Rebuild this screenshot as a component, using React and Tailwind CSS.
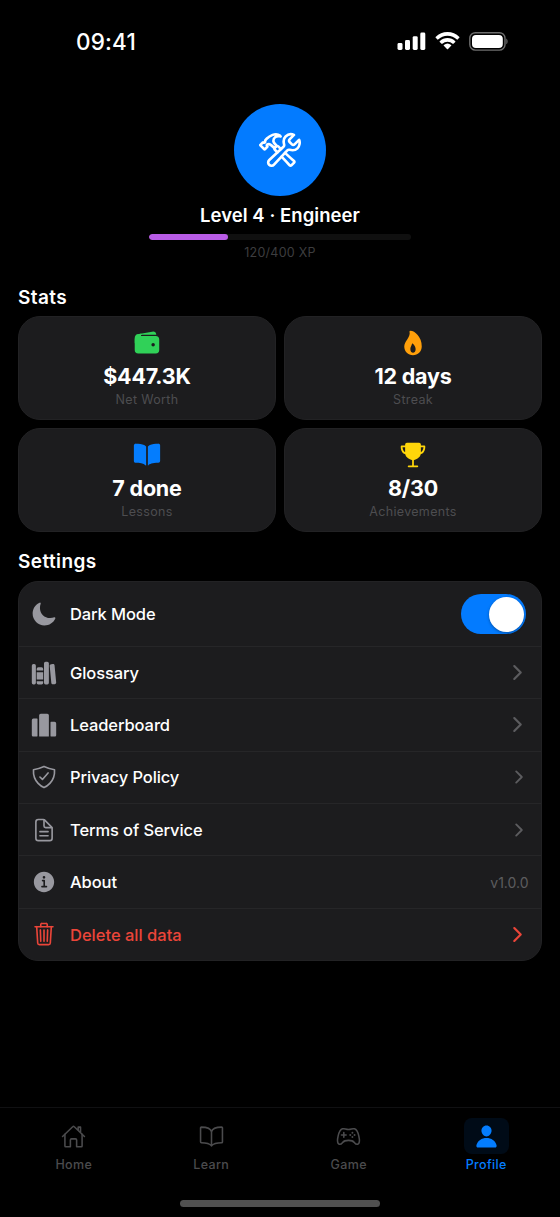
import {
  IoWallet, IoFlame, IoBook, IoTrophy, IoMoon, IoLibrary, IoPodium,
  IoShieldCheckmarkOutline, IoDocumentTextOutline, IoInformationCircle,
  IoTrashOutline, IoChevronForward, IoHomeOutline, IoBookOutline,
  IoGameControllerOutline, IoPerson, IoConstructOutline,
} from "react-icons/io5";

function StatusBar() {
  return (
    <header className="flex h-[82px] items-center justify-between pl-[76px] pr-[52px]">
      <span className="pt-px text-[22.500px] leading-7 font-medium tracking-[0.2px]">09:41</span>
      <div className="flex items-center gap-[9px]">
        <svg width="29" height="18" viewBox="0 0 29 18" fill="currentColor">
          <rect x="0.5" y="11" width="5" height="7" rx="1.4" />
          <rect x="8" y="8" width="5" height="10" rx="1.4" />
          <rect x="15.7" y="4.2" width="5" height="13.8" rx="1.4" />
          <rect x="23.3" y="0.5" width="5" height="17.5" rx="1.4" />
        </svg>
        <svg width="25" height="18" viewBox="0 0 17 12" fill="currentColor">
          <path d="M8.5 2.4c2.4 0 4.7.9 6.4 2.6.1.1.3.1.5 0l1.2-1.3a.4.4 0 0 0 0-.5 11.7 11.7 0 0 0-16.2 0 .4.4 0 0 0 0 .5L1.600 5c.1.1.4.1.5 0a9.200 9.200 0 0 1 6.400-2.600zM8.500 6.500c1.300 0 2.600.5 3.500 1.400.2.100.400.100.500 0l1.300-1.300a.4.4 0 0 0 0-.5 7.600 7.600 0 0 0-10.600 0 .4.4 0 0 0 0 .5l1.300 1.300c.1.100.300.100.500 0a5.200 5.200 0 0 1 3.500-1.400zM11 9.300a.400.400 0 0 0 0-.5 3.800 3.800 0 0 0-5 0 .4.4 0 0 0 0 .5l2.300 2.300c.100.100.300.100.400 0z" />
        </svg>
        <svg width="39" height="19" viewBox="0 0 39 19" fill="none">
          <rect x="0.8" y="0.7" width="35.200" height="17.400" rx="5.600" stroke="#6d6d6d" strokeWidth="1.400" />
          <rect x="3" y="2.900" width="30.800" height="13" rx="3.900" fill="#fff" />
          <path d="M37.300 6.500c1.700.9 1.700 4.900 0 5.800z" fill="#6d6d6d" />
        </svg>
      </div>
    </header>
  );
}

function StatCard({ icon: Icon, color, value, label }) {
  return (
    <div className="flex h-[104px] flex-col items-center rounded-[22px] border border-[#222224] bg-[#1c1c1e] pt-[12px]">
      <Icon className={`size-[28px] ${color}`} />
      <div className="mt-[5px] text-[21.500px] leading-[28px] font-bold tracking-[-0.2px]">{value}</div>
      <div className="mt-[2px] text-[12.500px] leading-[16px] tracking-[0.330px] text-[#4d4d50]">{label}</div>
    </div>
  );
}

function Row({ icon: Icon, label, danger, small, children }) {
  return (
    <div className={`flex flex-1 items-center border-b border-[#262628] pl-[12px] pr-[12.500px] last:border-b-0 ${danger ? "text-[#eb4539]" : "text-white"}`}>
      <Icon className={`size-[26px] ${danger ? "" : "text-[#98989f]"}`} />
      <span className={`ml-[13px] flex-1 text-[16.500px] leading-[22px] font-medium ${danger ? "pt-px" : "tracking-[-0.1px]"}`}>{label}</span>
      {children || (
        <IoChevronForward className={`${small ? "size-[20px]" : "size-[23px]"} ${danger ? "" : "text-[#5c5c5f]"}`} />
      )}
    </div>
  );
}

function Tab({ icon: Icon, label, active }) {
  return (
    <div className={`flex flex-1 flex-col items-center ${active ? "text-[#047dfe]" : "text-[#4b4b4d]"}`}>
      <div className={`flex h-[36px] w-[45px] items-center justify-center rounded-[8px] ${active ? "bg-[#000b17]" : ""}`}>
        <Icon className="size-[25px]" />
      </div>
      <span className="mt-[3px] text-[12.500px] leading-[16px] font-medium tracking-[0.350px]">{label}</span>
    </div>
  );
}

export default function App() {
  return (
    <div className="flex h-[1217px] w-[560px] flex-col overflow-hidden bg-black font-['Inter',sans-serif] text-white">
      <StatusBar />
      <main className="flex flex-1 flex-col px-[18px] pt-[22px]">
        <section className="flex flex-col items-center">
          <div className="flex size-[92px] items-center justify-center rounded-full bg-[#037bff]">
            <IoConstructOutline className="size-[42px]" />
          </div>
          <h1 className="mt-[7px] text-[18.500px] leading-[24px] font-semibold tracking-[0.050px]">Level 4 · Engineer</h1>
          <div className="mt-[7px] h-[6px] w-[262px] overflow-hidden rounded-full bg-[#101010]">
            <div className="h-full w-[30%] rounded-full bg-[#b95ce6]" />
          </div>
          <div className="mt-[5px] text-[12.500px] leading-[16px] tracking-[0.250px] text-[#3d3d3f]">120/400 XP</div>
        </section>

        <h2 className="mt-[25px] text-[19px] leading-[24px] font-semibold tracking-[0.400px]">Stats</h2>
        <section className="mt-[6px] grid grid-cols-2 gap-[8px]">
          <StatCard icon={IoWallet} color="text-[#30d158]" value="$447.3K" label="Net Worth" />
          <StatCard icon={IoFlame} color="text-[#ff9f0a]" value="12 days" label="Streak" />
          <StatCard icon={IoBook} color="text-[#047dfe]" value="7 done" label="Lessons" />
          <StatCard icon={IoTrophy} color="text-[#ffd60a]" value="8/30" label="Achievements" />
        </section>

        <h2 className="mt-[18px] text-[19px] leading-[24px] font-semibold tracking-[0.400px]">Settings</h2>
        <section className="mt-[7px] flex h-[380px] flex-col rounded-[20px] border border-[#222224] bg-[#1c1c1e]">
          <div className="flex h-[65px]">
            <div className="flex flex-1 items-center border-b border-[#262628] pr-[15px] pl-[12px]">
              <IoMoon className="size-[26px] text-[#98989f]" />
              <span className="ml-[13px] flex-1 text-[16.500px] leading-[22px] font-medium tracking-[-0.1px]">Dark Mode</span>
              <button className="flex h-[40px] w-[65px] items-center justify-end rounded-full bg-[#037bff] pr-[2px]">
                <span className="size-[35px] rounded-full bg-white shadow-[0_1px_3px_rgba(0,0,0,0.35)]" />
              </button>
            </div>
          </div>
          <Row icon={IoLibrary} label="Glossary" />
          <Row icon={IoPodium} label="Leaderboard" />
          <Row icon={IoShieldCheckmarkOutline} label="Privacy Policy" small />
          <Row icon={IoDocumentTextOutline} label="Terms of Service" small />
          <Row icon={IoInformationCircle} label="About" small>
            <span className="pt-px text-[14px] text-[#5c5c5f]">v1.0.0</span>
          </Row>
          <Row icon={IoTrashOutline} label="Delete all data" danger />
        </section>
      </main>

      <footer className="h-[110px] border-t border-[#101012] pt-[10px]">
        <nav className="flex px-[5px]">
          <Tab icon={IoHomeOutline} label="Home" />
          <Tab icon={IoBookOutline} label="Learn" />
          <Tab icon={IoGameControllerOutline} label="Game" />
          <Tab icon={IoPerson} label="Profile" active />
        </nav>
        <div className="mx-auto mt-[27px] h-[7px] w-[200px] rounded-full bg-[#505050]" />
      </footer>
    </div>
  );
}
